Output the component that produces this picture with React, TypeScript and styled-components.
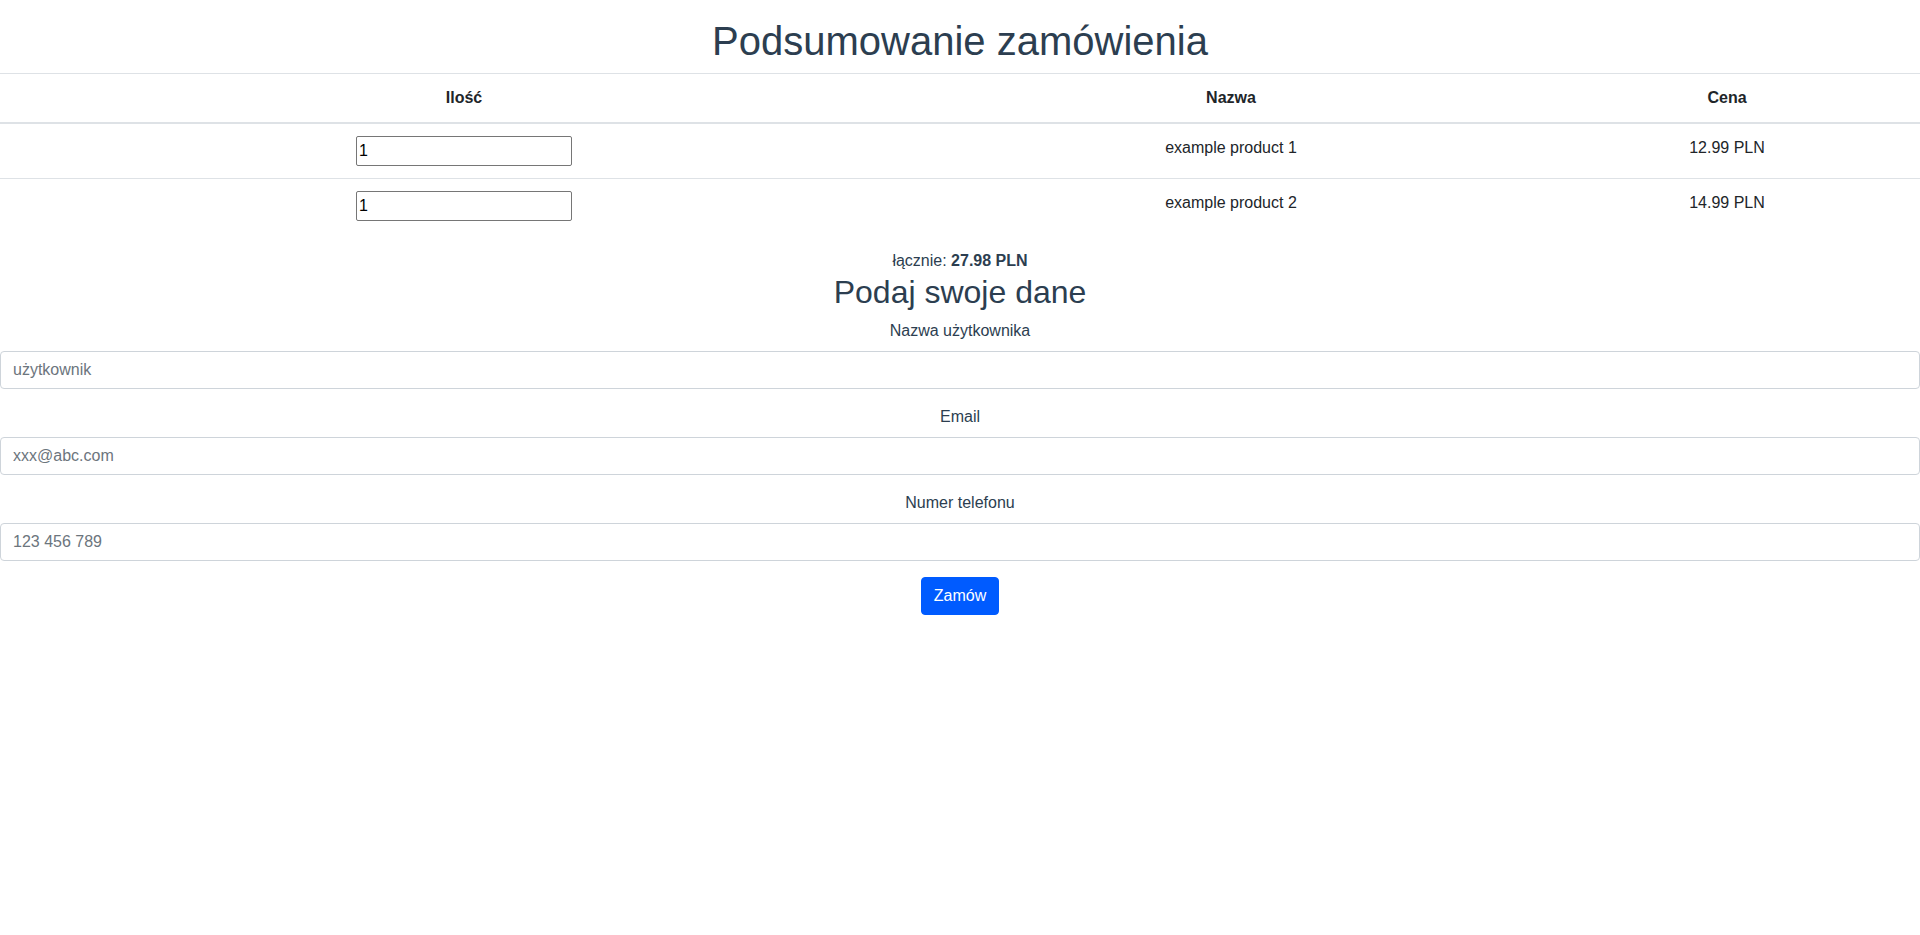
import React from "react";
import styled, { createGlobalStyle } from "styled-components";

const Global = createGlobalStyle`
  html, body { margin: 0; padding: 0; background: #fff; }
  body {
    font-family: "Liberation Sans", Arial, sans-serif;
    font-size: 16px;
    line-height: 1.5;
    color: #212529;
  }
  * { box-sizing: border-box; }
`;

const Page = styled.div`
  text-align: center;
  color: #2c3e50;
`;

const Title = styled.h1`
  margin: 17px 0 8px;
  font-size: 40px;
  font-weight: 400;
  line-height: 1.2;
`;

const Table = styled.table`
  width: 100%;
  border-collapse: collapse;
  margin-bottom: 16px;
  color: #212529;
`;

const Th = styled.th`
  padding: 12px;
  border-top: 1px solid #dee2e6;
  border-bottom: 2px solid #dee2e6;
  font-weight: 700;
  text-align: center;
  vertical-align: bottom;
`;

const Td = styled.td`
  padding: 12px;
  border-top: 1px solid #dee2e6;
  text-align: center;
  vertical-align: top;
`;

const QtyInput = styled.input`
  width: 216px;
  height: 30px;
  padding: 1px 2px;
  border: 1px solid #767676;
  border-radius: 2px;
  font-family: inherit;
  font-size: 16px;
  line-height: 24px;
  color: #000;
  margin: 0;
  vertical-align: top;
`;

const Total = styled.div`
  line-height: 24px;
`;

const Subtitle = styled.h2`
  margin: 0 0 8px;
  font-size: 32px;
  font-weight: 400;
  line-height: 1.2;
`;

const Form = styled.form`
  display: flex;
  flex-direction: column;
`;

const Group = styled.div`
  margin-bottom: 16px;
  display: flex;
  flex-direction: column;
`;

const Label = styled.label`
  display: block;
  margin-bottom: 8px;
  line-height: 24px;
`;

const Field = styled.input`
  display: block;
  width: 100%;
  height: 38px;
  padding: 6px 12px;
  font-family: inherit;
  font-size: 16px;
  line-height: 1.5;
  color: #495057;
  background: #fff;
  border: 1px solid #ced4da;
  border-radius: 4px;
  &::placeholder { color: #6c757d; opacity: 1; }
`;

const Button = styled.button`
  align-self: center;
  height: 38px;
  padding: 6px 12px;
  font-family: inherit;
  font-size: 16px;
  line-height: 24px;
  color: #fff;
  background: #005bff;
  border: 1px solid #005bff;
  border-radius: 4px;
  cursor: pointer;
`;

const items = [
  { name: "example product 1", price: "12.99 PLN" },
  { name: "example product 2", price: "14.99 PLN" },
];

export default function App() {
  return (
    <Page>
      <Global />
      <Title>Podsumowanie zamówienia</Title>
      <Table>
        <colgroup>
          <col style={{ width: "928px" }} />
          <col style={{ width: "606px" }} />
          <col style={{ width: "386px" }} />
        </colgroup>
        <thead>
          <tr>
            <Th>Ilość</Th>
            <Th>Nazwa</Th>
            <Th>Cena</Th>
          </tr>
        </thead>
        <tbody>
          {items.map((it) => (
            <tr key={it.name}>
              <Td>
                <QtyInput type="text" defaultValue="1" />
              </Td>
              <Td>{it.name}</Td>
              <Td>{it.price}</Td>
            </tr>
          ))}
        </tbody>
      </Table>
      <Total>
        łącznie: <b>27.98 PLN</b>
      </Total>
      <Subtitle>Podaj swoje dane</Subtitle>
      <Form onSubmit={(e) => e.preventDefault()}>
        <Group>
          <Label>Nazwa użytkownika</Label>
          <Field placeholder="użytkownik" />
        </Group>
        <Group>
          <Label>Email</Label>
          <Field placeholder="xxx@abc.com" />
        </Group>
        <Group>
          <Label>Numer telefonu</Label>
          <Field placeholder="123 456 789" />
        </Group>
        <Button type="submit">Zamów</Button>
      </Form>
    </Page>
  );
}
